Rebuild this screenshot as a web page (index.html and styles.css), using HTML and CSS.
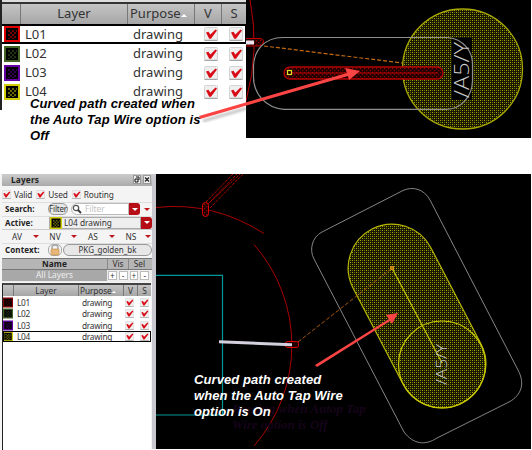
FILE: index.html
```html
<!DOCTYPE html>
<html lang="en">
<head>
<meta charset="utf-8">
<title>Auto Tap Wire</title>
<link rel="stylesheet" href="styles.css">
</head>
<body>
<svg class="defs" width="0" height="0" aria-hidden="true">
  <defs>
    <pattern id="dots" width="4" height="4" patternUnits="userSpaceOnUse" shape-rendering="crispEdges"><rect width="4" height="4" fill="#181800"/><path d="M0 0h1v1H0zM2 2h1v1H2z" fill="#a8a800"/><path d="M2 0h1v1H2zM0 2h1v1H0z" fill="#686800"/></pattern>
    <pattern id="redDots" width="4" height="4" patternUnits="userSpaceOnUse"><rect width="4" height="4" fill="#200000"/><rect width="1.200" height="1.200" fill="#900000"/><rect x="2" y="2" width="1.200" height="1.200" fill="#900000"/></pattern>
    <symbol id="check" viewBox="0 0 14 14"><rect x=".5" y=".5" width="13" height="13" rx="1" fill="#efefef" stroke="#d4d4d4"/><path d="M.5 13.3H13.5" stroke="#999"/><path d="M2 5.500 4.500 4.800 6.300 7.500 11.500 2.500 13 3.500 7 11.700H5.200Z" fill="#d90d18"/></symbol>
    <symbol id="swatch" viewBox="0 0 16 16"><rect x="1" y="1" width="14" height="14" fill="#000" stroke="currentColor" stroke-width="2"/><path d="M4 4h2v2H4zM8 4h2v2H8zM12 4h1v2h-1zM6 6h2v2H6zM10 6h2v2h-2zM4 8h2v2H4zM8 8h2v2H8zM6 10h2v2H6zM10 10h2v2h-2zM4 12h2v1H4zM8 12h2v1H8z" fill="currentColor" opacity=".5"/></symbol>
    <filter id="soft"><feGaussianBlur stdDeviation="1.200"/></filter>
  </defs>
</svg>
<main class="page">
  <section class="top">
    <div class="table big">
      <div class="row head"><span></span><span>Layer</span><span class="purpose">Purpose<i></i></span><span>V</span><span>S</span></div>
      <div class="row selected"><svg class="sw red"><use href="#swatch"/></svg><span>L01</span><span>drawing</span><svg class="ck"><use href="#check"/></svg><svg class="ck"><use href="#check"/></svg></div>
      <div class="row"><svg class="sw green"><use href="#swatch"/></svg><span>L02</span><span>drawing</span><svg class="ck"><use href="#check"/></svg><svg class="ck"><use href="#check"/></svg></div>
      <div class="row"><svg class="sw purple"><use href="#swatch"/></svg><span>L03</span><span>drawing</span><svg class="ck"><use href="#check"/></svg><svg class="ck"><use href="#check"/></svg></div>
      <div class="row"><svg class="sw yellow"><use href="#swatch"/></svg><span>L04</span><span>drawing</span><svg class="ck"><use href="#check"/></svg><svg class="ck"><use href="#check"/></svg></div>
    </div>
    <svg class="canvas" width="285" height="138" viewBox="246 0 285 138" fill="none">
      <path d="M250 0Q260 50 246 101" stroke="#b80000"/>
      <path d="M246 38.500H260Q264 39 263.500 42.500Q263 46 259 46H246" stroke="#c00000" fill="url(#redDots)"/>
      <rect x="246" y="40.500" width="8" height="4" fill="#e8e4ee"/>
      <circle cx="462.500" cy="69" r="60" fill="url(#dots)" stroke="#a8a800" stroke-width="1.300"/>
      <path d="M264 46 402 63" stroke="#c46a12" stroke-dasharray="4 2" stroke-width="1.200"/>
      <rect x="452" y="38" width="20" height="62" fill="#000"/>
      <path d="M284 37.500H448C463 39 472.500 51 472.500 64V81C472 97 461 109 446 109.300H284C265 108 253.500 93 253.500 77V66C254 51 264 37 284 37.500Z" stroke="#8f8f8f" stroke-width="1.200"/>
      <rect x="284" y="67" width="159" height="12" rx="6" fill="url(#redDots)" stroke="#b80000" stroke-width="1.300"/>
      <path d="M290 73H438" stroke="#c00000"/>
      <rect x="287.500" y="70.500" width="4" height="4" fill="#200" stroke="#dddd22" stroke-width="1.200"/>
      <text class="pin" transform="translate(469 98) rotate(-90)" font-size="21" textLength="56" lengthAdjust="spacingAndGlyphs">/A5/Y</text>
    </svg>
  </section>

  <section class="bottom">
    <aside class="panel">
      <div class="title"><b>Layers</b><svg width="18" height="10" viewBox="0 0 18 10" fill="none"><rect x=".5" y=".5" width="7" height="8" fill="#eee" stroke="#999"/><path d="M3 2h3v3M2 4h3v3H2Z" stroke="#111"/><rect x="10.500" y=".5" width="7" height="8" fill="#eee" stroke="#999"/><path d="m12 2.500 4 4m0-4-4 4" stroke="#222" stroke-width="1.200"/></svg></div>
      <div class="options"><svg><use href="#check"/></svg><span>Valid</span><svg><use href="#check"/></svg><span>Used</span><svg><use href="#check"/></svg><span>Routing</span></div>
      <div class="field"><b>Search:</b><span class="pill filter">Filter</span><span class="input"><svg width="10" height="10" viewBox="0 0 10 10" fill="none"><circle cx="4" cy="4" r="2.700" stroke="#555" stroke-width="1.300"/><path d="m6 6 3 3" stroke="#333" stroke-width="1.800"/></svg><em>Filter</em></span><span class="drop"><i></i></span><i class="tri"></i></div>
      <div class="field"><b>Active:</b><span class="combo"><svg class="yellow" width="12" height="12"><use href="#swatch"/></svg>L04 drawing</span><span class="drop wide"><i></i></span></div>
      <div class="modes"><span>AV</span><i></i><span>NV</span><i></i><span>AS</span><i></i><span>NS</span><i></i></div>
      <div class="field"><b>Context:</b><span class="lock"><svg width="12" height="12" viewBox="0 0 12 12"><path d="M3 6V3.500Q3 1 6 1t3 2.500V6" fill="none" stroke="#aaa" stroke-width="1.500"/><rect x="2" y="5" width="8" height="6" rx="1" fill="#e8b578" stroke="#c99252" stroke-width=".7"/></svg></span><span class="pill context">PKG_golden_bk</span></div>
      <div class="names"><b>Name</b><span>Vis</span><span>Sel</span></div>
      <div class="all"><span>All Layers</span><u>+</u><u>-</u><u>+</u><u>-</u></div>
      <div class="table small">
        <div class="row head"><span></span><span>Layer</span><span class="purpose">Purpose<i></i></span><span>V</span><span>S</span></div>
        <div class="row"><svg class="sw darkred"><use href="#swatch"/></svg><span>L01</span><span>drawing</span><svg class="ck"><use href="#check"/></svg><svg class="ck"><use href="#check"/></svg></div>
        <div class="row"><svg class="sw green"><use href="#swatch"/></svg><span>L02</span><span>drawing</span><svg class="ck"><use href="#check"/></svg><svg class="ck"><use href="#check"/></svg></div>
        <div class="row"><svg class="sw purple"><use href="#swatch"/></svg><span>L03</span><span>drawing</span><svg class="ck"><use href="#check"/></svg><svg class="ck"><use href="#check"/></svg></div>
        <div class="row selected"><svg class="sw yellow"><use href="#swatch"/></svg><span>L04</span><span>drawing</span><svg class="ck"><use href="#check"/></svg><svg class="ck"><use href="#check"/></svg></div>
      </div>
    </aside>
    <div class="splitter"></div>
    <svg class="canvas" width="375" height="275" viewBox="156 174 375 275" fill="none">
      <path d="M156 275.300H222.500V415H156" stroke="#009898" stroke-width="1.200"/>
      <path d="M156 207.500Q213 201 264 233.500M254 244.500A153 153 0 0 1 254 446" stroke="#a80000"/>
      <path d="M206 202 233 174M208 204 237 174M210 208 243 174M207 205 240 174" stroke="#b00000" stroke-dasharray="3 1"/>
      <rect x="202.500" y="202.500" width="6" height="14" rx="3" fill="url(#redDots)" stroke="#e00000"/>
      <path d="M322 232 403 190.500C413 186 424 189 430 200L518 370C525 383 522 395 509 402L437 438C425 446 413 444 404 432L314 259C309 250 312 237 322 232Z" stroke="#858585"/>
      <path d="M431 248 481 344A43.500 43.500 0 0 1 403 384L353 288A43.500 43.500 0 0 1 431 248Z" fill="url(#dots)" stroke="#b8b800" stroke-width="1.200"/>
      <circle cx="442" cy="364.500" r="43.500" stroke="#c8c800" stroke-width="1.200"/>
      <path d="M392 268 442 363" stroke="#c8c800" stroke-width="1.200"/>
      <rect x="390.500" y="266.500" width="3" height="3" fill="#a80" stroke="#d98b18"/>
      <path d="M298 342 391 269" stroke="#a85a10" stroke-dasharray="4 2"/>
      <rect x="285.500" y="341.500" width="13" height="6" rx="2" fill="#200" stroke="#e00000"/>
      <path d="m219 341.800 73 3" stroke="#d5d0df" stroke-width="3"/>
      <text class="pin" transform="translate(447 385) rotate(-90)" font-size="14" textLength="41" lengthAdjust="spacingAndGlyphs">/A5/Y</text>
    </svg>
  </section>
  <svg class="arrows" width="532" height="450" viewBox="0 0 532 450">
    <path d="m203 121 43-12.500" stroke="#777" stroke-width="3" opacity=".4" filter="url(#soft)"/>
    <g fill="#fb4444"><path d="m199 116 148-43-2-5 15 3-11 9-1-4-148 43Z"/><path d="m315 365 74-46-3-4 12-2-6 11-2-3-73 46Z"/></g>
  </svg>
  <p class="note off">Curved path created when<br>the Auto Tap Wire option is<br>Off</p>
  <p class="note ghost">Routing when Autop Tap<br>Wire option is Off</p>
  <p class="note on">Curved path created<br>when the Auto Tap Wire<br>option is On</p>
</main>
</body>
</html>
```
FILE: styles.css
```css
* { box-sizing: border-box; }
body { margin: 0; background: #fff; font-family: "Noto Sans", sans-serif; color: #333; }
.defs { position: absolute; }
.page { position: relative; width: 532px; height: 450px; overflow: hidden; }
.top { display: flex; height: 138px; }
.canvas { display: block; background: #000; flex: none; }
.bottom { display: flex; height: 275px; margin-top: 36px; }

.row { display: grid; align-items: center; }
.head { background: linear-gradient(#c4c4c4, #a6a6a6); text-align: center; }
.head span { height: 100%; border-right: 1px solid #777; }
.head span:last-child { border: 0; }
.purpose i { display: inline-block; border: solid transparent; border-width: 0 .3em .3em; border-bottom-color: #fff; margin-bottom: .1em; }
.sw { display: block; }
.red { color: #e00000; }
.darkred { color: #850000; }
.green { color: #426526; }
.purple { color: #6500a5; }
.yellow { color: #d2cc08; }

.big { width: 246px; height: 110px; padding-top: 2px; border-left: 2px solid #222; background: linear-gradient(#ddd 0 2px, #333 2px 4px, #fff 4px); font-size: 13px; line-height: 19px; }
.big .row { grid-template-columns: 19px 107px 67px 27px 24px; height: 19.2px; }
.big .head { height: 22px; border-top: 2px solid #333; }
.big .purpose { text-align: left; padding-left: 2px; white-space: nowrap; }
.big .row:not(.head) span:nth-child(2) { padding-left: 4px; }
.big .row:not(.head) span:nth-child(3) { padding-left: 5px; }
.big .selected { height: 20px; box-shadow: inset 0 2px #000, inset 0 -2px #000, inset -1px 0 #000; }
.big .sw { width: 16px; height: 16px; margin-left: 2px; }
.big .ck { width: 14px; height: 14px; margin-left: 9px; }
.big .ck:last-child { margin-left: 7px; }

.panel { width: 152px; padding-left: 2px; background: #f4f4f4; font-size: 8.3px; line-height: 12px; color: #333; }
.panel b { color: #222; }
.title { display: flex; align-items: center; justify-content: space-between; height: 12px; padding: 0 1px 0 9px; background: linear-gradient(#ccc, #aaa); }
.options { display: flex; align-items: center; height: 16px; padding-top: 1px; }
.options svg { width: 9px; height: 9px; }
.options span { margin: 0 4px 0 3px; letter-spacing: -.1px; }
.field { display: flex; align-items: center; height: 13.6px; padding-left: 3px; border-top: 1px solid #ddd; }
.field b { width: 43px; flex: none; font-size: 8px; letter-spacing: .1px; }
.title b { letter-spacing: .15px; }
.pill { border: 1px solid #999; border-radius: 6px; background: #e7e7e7; line-height: 10px; text-align: center; }
.filter { display: flex; justify-content: center; width: 20px; height: 12px; font-size: 8px; letter-spacing: -.2px; }
.input { display: flex; align-items: center; gap: 3px; width: 58px; height: 12px; margin-left: 3px; border: 1px solid #bbb; border-radius: 6px 0 0 6px; background: #fff; }
.input em { font-style: normal; color: #c2c2c2; }
.drop { display: flex; align-items: center; justify-content: center; width: 11px; height: 12px; border-radius: 0 3px 3px 0; background: #b60e17; flex: none; }
.drop i, .tri, .modes i { border: solid transparent; border-width: 3px 3px 0; border-top-color: #c01620; }
.drop i { border-top-color: #fff; }
.tri { margin-left: 4px; }
.combo { display: flex; align-items: center; gap: 2px; width: 92px; height: 12px; margin-left: 1px; border: 1px solid #aaa; background: #eee; }
.modes { display: grid; grid-template-columns: 24px 14px 24px 14px 24px 14px 24px 8px; align-items: center; height: 14px; padding-left: 3px; border-top: 1px solid #ccc; text-align: center; }
.modes i { width: 6px; margin-left: 4px; }
.modes i:last-child { margin-left: 2px; }
.lock { display: flex; justify-content: center; width: 14px; height: 12px; border: 1px solid #aaa; border-radius: 5px; }
.lock svg { margin-top: -1px; }
.context { width: 89px; margin-left: 1px; font-size: 8px; }
.names { display: grid; grid-template-columns: 105px 21px 22px; height: 12px; margin-top: 1px; border: solid #777; border-width: 1px 0; background: #b5b5b5; text-align: center; line-height: 10px; }
.names span { border-left: 1px solid #888; }
.all { display: grid; grid-template-columns: 105px repeat(4, 10.8px); align-items: center; height: 12px; background: #eee; text-align: center; }
.all span { height: 11px; line-height: 10px; background: #a8a8a8; color: #eee; }
.all u { height: 9px; margin: 0 1px; border: 1px solid #bbb; background: #fff; line-height: 7px; text-decoration: none; }
.small { width: 149px; height: 167px; margin-top: 1px; border-left: 1px solid #222; border-top: 2px solid #444; background: #fff; }
.small .row { grid-template-columns: 11px 65px 45px 14px 13px; height: 11.5px; line-height: 11px; }
.small .row .purpose { text-align: left; padding-left: 1px; white-space: nowrap; letter-spacing: -.1px; }
.small .row:not(.head) span:nth-child(2) { padding-left: 3px; letter-spacing: -.3px; }
.small .row:not(.head) span:nth-child(3) { padding-left: 3px; letter-spacing: -.25px; }
.small .sw { width: 10px; height: 11px; }
.small .ck { width: 9px; height: 9px; margin-left: 1px; }
.small .ck:last-child { margin-left: 2px; }
.small .selected { outline: 1px solid #000; outline-offset: -1px; }
.splitter { width: 4px; background: #c8c8ce; }

.pin { font-family: "Open Sans", sans-serif; font-weight: 300; fill: #ccc; }
.arrows { position: absolute; left: 0; top: 0; }
.note { position: absolute; margin: 0; font: italic bold 13px/16px "Liberation Sans", sans-serif; white-space: nowrap; }
.off { left: 30px; top: 95.5px; color: #000; letter-spacing: .1px; }
.on { left: 194px; top: 372px; color: #fff; letter-spacing: .08px; }
.ghost { left: 232px; top: 401px; color: #16041a; font-family: "Liberation Serif", serif; }
```
